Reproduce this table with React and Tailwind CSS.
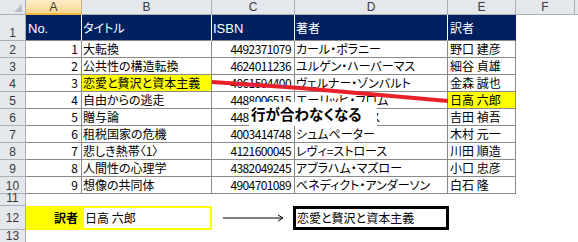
import React from "react";

const rows = [
  ["1", "大転換", "4492371079", "カール・ポラニー", "野口 建彦"],
  ["2", "公共性の構造転換", "4624011236", "ユルゲン・ハーバーマス", "細谷 貞雄"],
  ["3", "恋愛と贅沢と資本主義", "4061594400", "ヴェルナー・ゾンバルト", "金森 誠也"],
  ["4", "自由からの逃走", "4488006515", "エーリッヒ・フロム", "日高 六郎"],
  ["5", "贈与論", "4480089225", "マルセル・モース", "吉田 禎吾"],
  ["6", "租税国家の危機", "4003414748", "シュムペーター", "木村 元一"],
  ["7", "悲しき熱帯〈1〉", "4121600045", "レヴィ=ストロース", "川田 順造"],
  ["8", "人間性の心理学", "4382049245", "アブラハム・マズロー", "小口 忠彦"],
  ["9", "想像の共同体", "4904701089", "ベネディクト・アンダーソン", "白石 隆"],
];

function RowHead({ n, className = "" }) {
  return (
    <div
      className={
        "bg-[#e4e7eb] border-r border-b border-[#a9afb7] flex justify-center text-[12px] leading-none text-[#3a3a3a] font-['Liberation_Sans',sans-serif] " +
        className
      }
    >
      {n}
    </div>
  );
}

function ColHead({ label, last }) {
  return (
    <div
      className={
        "bg-[#e4e7eb] border-b border-[#a9afb7] flex items-center justify-center text-[12px] leading-none text-[#3a3a3a] font-['Liberation_Sans',sans-serif] " +
        (last ? "" : "border-r")
      }
    >
      {label}
    </div>
  );
}

export default function App() {
  const cell =
    "border-r border-b border-[#8a8a8a] flex items-center whitespace-nowrap overflow-hidden leading-none";
  return (
    <div className="relative w-[578px] h-[242px] overflow-hidden bg-white text-black font-['Noto_Sans_CJK_JP',sans-serif] [font-feature-settings:'palt'] text-[12px]">
      <div className="grid grid-cols-[26px_56px_130px_83px_153px_68px_59px_1fr] grid-rows-[15px_26px_repeat(9,17px)_12px_24px_1fr] h-[242px]">
        {/* column header row */}
        <div className="bg-[#e4e7eb] border-r border-b border-[#a9afb7] relative">
          <svg className="absolute right-[3px] bottom-[2px]" width="8" height="8" viewBox="0 0 8 8">
            <polygon points="8,0 8,8 0,8" fill="#b9bec5" />
          </svg>
        </div>
        <div className="bg-linear-to-b from-[#fdeec9] to-[#f8d68c] border-r border-[#c9b27a] border-b-2 border-b-[#f0b543] flex items-center justify-center text-[12px] leading-none text-[#3a3a3a] font-['Liberation_Sans',sans-serif]">
          A
        </div>
        <ColHead label="B" />
        <ColHead label="C" />
        <ColHead label="D" />
        <ColHead label="E" />
        <ColHead label="F" />
        <ColHead label="" last />

        {/* row 1 header */}
        <RowHead n="1" className="items-end pb-[1px]" />
        <div className="bg-[#002060] text-white border-r border-white border-b border-b-[#8a8a8a] flex items-center pl-[2px] pt-[1px] leading-none font-['Liberation_Sans',sans-serif] text-[13px]">
          No.
        </div>
        <div className="bg-[#002060] text-white border-r border-white border-b border-b-[#8a8a8a] flex items-center pl-[1px] pt-[1px] leading-none">
          タイトル
        </div>
        <div className="bg-[#002060] text-white border-r border-white border-b border-b-[#8a8a8a] flex items-center pl-[1px] pt-[1px] leading-none font-['Liberation_Sans',sans-serif] text-[13px]">
          ISBN
        </div>
        <div className="bg-[#002060] text-white border-r border-white border-b border-b-[#8a8a8a] flex items-center pl-[1px] pt-[1px] leading-none">
          著者
        </div>
        <div className="bg-[#002060] text-white border-r border-r-[#002060] border-b border-b-[#8a8a8a] flex items-center pl-[2px] pt-[1px] leading-none">
          訳者
        </div>
        <div />
        <div />

        {rows.map((r, i) => (
          <React.Fragment key={i}>
            <RowHead n={String(i + 2)} className="items-end pb-[1px]" />
            <div className={cell + " justify-end pr-[3px]"}>{r[0]}</div>
            <div className={cell + " pl-[1px] " + (i === 2 ? "bg-[#ffff00]" : "")}>{r[1]}</div>
            <div className={cell + " justify-end pr-[3px] tracking-[-0.6px]"}>{r[2]}</div>
            <div className={cell + " pl-[1px]"}>{r[3]}</div>
            <div className={cell + " pl-[2px] " + (i === 3 ? "bg-[#ffff00]" : "")}>{r[4]}</div>
            <div />
            <div />
          </React.Fragment>
        ))}

        {/* row 11 */}
        <RowHead n="11" className="items-end pb-[1px]" />
        <div className="col-span-7" />

        {/* row 12 */}
        <RowHead n="12" className="items-center" />
        <div className="bg-[#ffff00] flex items-center justify-end pr-[4px] font-bold leading-none">訳者</div>
        <div className="bg-white border-2 border-[#ffff00] flex items-center pl-[1px] leading-none">日高 六郎</div>
        <div className="flex items-center">
          <svg width="83" height="10" viewBox="0 0 83 10">
            <line x1="11" y1="5" x2="71" y2="5" stroke="#000" strokeWidth="1" />
            <polyline points="66,2 71,5 66,8" fill="none" stroke="#000" strokeWidth="1" />
          </svg>
        </div>
        <div className="ml-[-2px] mr-[-1px] border-[3px] border-black flex items-center pl-[1px] leading-none whitespace-nowrap">
          恋愛と贅沢と資本主義
        </div>
        <div className="col-span-3" />

        {/* row 13 */}
        <RowHead n="13" className="items-end pb-[1px] border-b-0" />
        <div className="col-span-7" />
      </div>

      {/* red line */}
      <svg className="absolute left-0 top-0 pointer-events-none" width="578" height="242" viewBox="0 0 578 242">
        <polyline points="212,82 300,88 380,95 448,101" fill="none" stroke="#e8202a" strokeWidth="4" strokeLinecap="butt" />
      </svg>

      {/* label */}
      <div className="absolute left-[249px] top-[102px] w-[128px] h-[24px] bg-white flex items-center pl-[2px] font-bold text-[14.5px] leading-none whitespace-nowrap">
        行が合わなくなる
      </div>
    </div>
  );
}
